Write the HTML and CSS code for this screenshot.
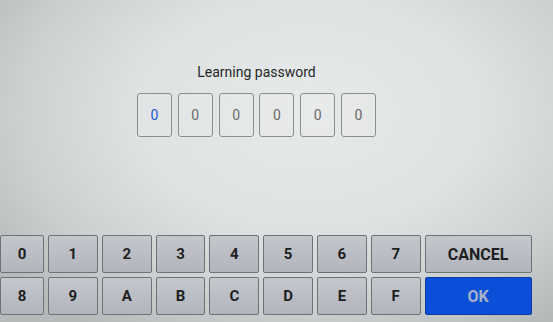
FILE: index.html
```html
<!DOCTYPE html>
<html>
<head>
<meta charset="utf-8">
<link rel="stylesheet" href="styles.css">
</head>
<body>
<div class="screen">
  <div class="top">
    <div class="title">Learning password</div>
    <div class="digits">
      <div class="digit active">0</div>
      <div class="digit">0</div>
      <div class="digit">0</div>
      <div class="digit">0</div>
      <div class="digit">0</div>
      <div class="digit">0</div>
    </div>
  </div>
  <div class="keyboard">
    <div class="key">0</div>
    <div class="key">1</div>
    <div class="key">2</div>
    <div class="key">3</div>
    <div class="key">4</div>
    <div class="key">5</div>
    <div class="key">6</div>
    <div class="key">7</div>
    <div class="key wide">CANCEL</div>
    <div class="key">8</div>
    <div class="key">9</div>
    <div class="key">A</div>
    <div class="key">B</div>
    <div class="key">C</div>
    <div class="key">D</div>
    <div class="key">E</div>
    <div class="key">F</div>
    <div class="key wide ok">OK</div>
  </div>
</div>
</body>
</html>
```

FILE: styles.css
```css
html, body {
  margin: 0;
  padding: 0;
}
body {
  width: 553px;
  height: 322px;
  overflow: hidden;
  font-family: Roboto, "Liberation Sans", sans-serif;
  background: radial-gradient(ellipse 70% 80% at 56% 35%, #e7eaea 0%, #dfe2e2 45%, #cdd0d0 75%, #b6b9b9 100%);
}
.screen {
  height: 322px;
  display: flex;
  flex-direction: column;
  box-sizing: border-box;
  padding-bottom: 7px;
}
.top {
  padding-top: 64px;
  padding-right: 40px;
  display: flex;
  flex-direction: column;
  align-items: center;
}
.title {
  font-size: 14px;
  line-height: 16px;
  color: #262828;
}
.digits {
  margin-top: 13px;
  display: flex;
  gap: 5.8px;
}
.digit {
  width: 35px;
  height: 44px;
  box-sizing: border-box;
  border: 1px solid #8b8e8e;
  border-radius: 3px;
  display: flex;
  align-items: center;
  justify-content: center;
  font-size: 14px;
  color: #686a6a;
  background: rgba(255,255,255,0.08);
}
.digit.active {
  color: #1f58d4;
}
.keyboard {
  margin-top: auto;
  display: grid;
  grid-template-columns: 44px repeat(7, 49.8px) 107px;
  grid-template-rows: 38px 38px;
  gap: 4px;
}
.key {
  box-sizing: border-box;
  border: 1px solid #6e7175;
  border-radius: 2px;
  background: linear-gradient(#c5c7cd, #b3b5bc);
  display: flex;
  align-items: center;
  justify-content: center;
  font-size: 15px;
  font-weight: bold;
  color: #1d1f21;
}
.key.wide {
  font-size: 16px;
}
.key.ok {
  background: #0b4fd8;
  border-color: #0a3d9e;
  color: #a9b3c8;
}
```
